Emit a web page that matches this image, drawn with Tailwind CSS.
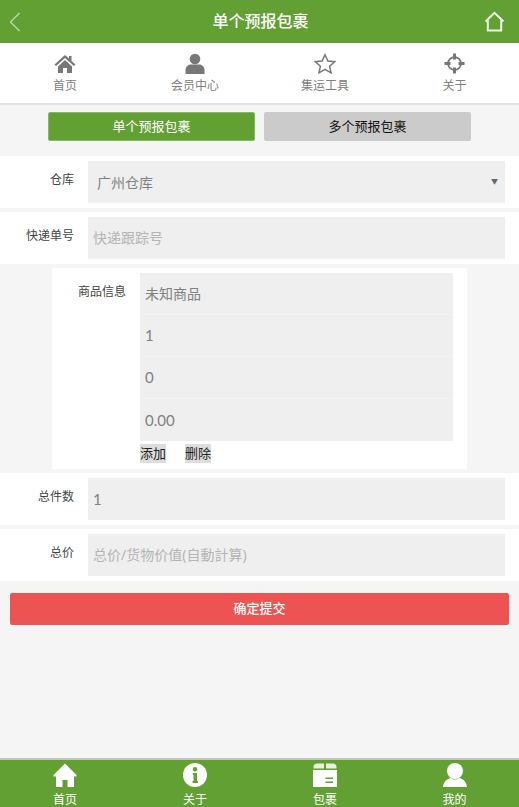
<!DOCTYPE html>
<html lang="zh">
<head>
<meta charset="utf-8">
<title>单个预报包裹</title>
<script src="https://cdn.jsdelivr.net/npm/@tailwindcss/browser@4"></script>
</head>
<body class="bg-[#f5f5f5] font-['Noto_Sans','Noto_Sans_CJK_SC',sans-serif]">
<div class="w-[519px] h-[807px] flex flex-col overflow-hidden">
  <header class="h-[43px] shrink-0 bg-[#62a033] grid grid-cols-[1fr_auto_1fr] items-center pl-[9px] pr-[14px]">
    <svg width="12" height="20" viewBox="0 0 12 20" fill="none" stroke="#b9d6a4" stroke-width="1.5"><path d="M10.5 1 L1.5 10 L10.5 19"/></svg>
    <h1 class="text-white text-[16px] leading-[43px] font-medium pl-[7px]">单个预报包裹</h1>
    <svg class="justify-self-end" width="21" height="21" viewBox="0 0 21 21" fill="none" stroke="#eef5e8" stroke-width="2"><path d="M1.5 10.5 L10.5 1.8 L19.5 10.5 M3.8 9 V19.5 H17.2 V9"/></svg>
  </header>
  <nav class="h-[62px] shrink-0 bg-white border-b-2 border-[#e2e2e2] grid grid-cols-[130px_130px_130px_129px] text-[12px] text-[#808080] text-center">
    <div class="flex flex-col items-center pt-[11px]">
      <svg width="22" height="20" viewBox="0 0 22 20" fill="#777"><path d="M11 1 L0.5 10.5 L2 12 L11 4 L20 12 L21.5 10.5 L17.5 7 V2 H15 V4.6 Z"/><path d="M4 12.5 L11 6 L18 12.5 V19 H13 V14 H9 V19 H4 Z"/></svg>
      <span class="leading-[16px] mt-[4px]">首页</span>
    </div>
    <div class="flex flex-col items-center pt-[10px]">
      <svg width="20" height="21" viewBox="0 0 20 21" fill="#777"><circle cx="10" cy="6" r="5.3"/><path d="M0.5 21 V17 C0.5 13.5 3.5 11.5 6 11.5 H14 C16.5 11.5 19.5 13.5 19.5 17 V21 Z"/></svg>
      <span class="leading-[16px] mt-[4px]">会员中心</span>
    </div>
    <div class="flex flex-col items-center pt-[10px]">
      <svg width="22" height="21" viewBox="0 0 22 21" fill="none" stroke="#777" stroke-width="1.5"><path d="M11 1.8 L13.9 8 L20.6 8.7 L15.6 13.2 L17 19.8 L11 16.4 L5 19.8 L6.4 13.2 L1.4 8.7 L8.1 8 Z"/></svg>
      <span class="leading-[16px] mt-[4px]">集运工具</span>
    </div>
    <div class="flex flex-col items-center pt-[10px]">
      <svg width="21" height="21" viewBox="0 0 21 21" fill="none" stroke="#777"><circle cx="10.5" cy="10.5" r="6.4" stroke-width="1.8"/><path d="M10.5 0.5 V6.5 M10.5 14.5 V20.5 M0.5 10.5 H6.5 M14.5 10.5 H20.5" stroke-width="3"/></svg>
      <span class="leading-[16px] mt-[4px]">关于</span>
    </div>
  </nav>
  <div class="flex-1 min-h-0 flex flex-col">
    <div class="flex gap-[9px] pl-[48px] pt-[7px] h-[51px] shrink-0 text-[13px]">
      <button class="w-[207px] h-[29px] rounded-[2px] bg-[#62a033] border border-[#85ba63] text-white">单个预报包裹</button>
      <button class="w-[207px] h-[29px] rounded-[2px] bg-[#cbcbcb] text-[#111]">多个预报包裹</button>
    </div>
    <div class="flex flex-col gap-[4px]">
      <div class="h-[52px] bg-white flex pt-[5px] pr-[14px]">
        <label class="w-[74px] text-right text-[12px] text-[#444] leading-[38px] h-[30px]">仓库</label>
        <div class="ml-[14px] flex-1 h-[42px] bg-[#efefef] flex items-center justify-between pl-[9px] pr-[7px] text-[14px] text-[#808080] pt-[1px]"><span>广州仓库</span><span class="text-[7px] text-[#666]">▼</span></div>
      </div>
      <div class="h-[52px] bg-white flex pt-[5px] pr-[14px]">
        <label class="w-[74px] text-right text-[12px] text-[#444] leading-[38px] h-[30px]">快递单号</label>
        <div class="ml-[14px] flex-1 h-[42px] bg-[#efefef] flex items-center px-[5px] pb-[1px] text-[14px] text-[#b4b4b4]">快递跟踪号</div>
      </div>
      <div class="h-[201px] ml-[52px] mr-[52px] bg-white flex pt-[5px]">
        <label class="w-[74px] text-right text-[12px] text-[#444] leading-[38px] h-[30px]">商品信息</label>
        <div class="ml-[14px] w-[313px]">
          <div class="bg-[#efefef] divide-y divide-[#f3f3f3] text-[14px] text-[#808080]">
            <div class="h-[42px] flex items-center px-[5px]">未知商品</div>
            <div class="h-[42px] flex items-center px-[5px] font-['Lato'] text-[15px]">1</div>
            <div class="h-[42px] flex items-center px-[5px] font-['Lato'] text-[15px]">0</div>
            <div class="h-[42px] flex items-center px-[5px] font-['Lato'] text-[15px]">0.00</div>
          </div>
          <div class="flex gap-[19px] mt-[3px] text-[13px] text-[#222]">
            <span class="bg-[#ddd] w-[26px] h-[19px] leading-[19px] text-center">添加</span>
            <span class="bg-[#ddd] w-[26px] h-[19px] leading-[19px] text-center">删除</span>
          </div>
        </div>
      </div>
      <div class="h-[52px] bg-white flex pt-[5px] pr-[14px]">
        <label class="w-[74px] text-right text-[12px] text-[#444] leading-[38px] h-[30px]">总件数</label>
        <div class="ml-[14px] flex-1 h-[42px] bg-[#efefef] flex items-center px-[5px] font-['Lato'] text-[15px] text-[#808080]">1</div>
      </div>
      <div class="h-[52px] bg-white flex pt-[5px] pr-[14px]">
        <label class="w-[74px] text-right text-[12px] text-[#444] leading-[38px] h-[30px]">总价</label>
        <div class="ml-[14px] flex-1 h-[42px] bg-[#efefef] flex items-center px-[5px] pb-[1px] text-[14px] text-[#b4b4b4]">总价/货物价值(自動計算)</div>
      </div>
    </div>
    <button class="mx-[10px] mt-[12px] h-[32px] shrink-0 rounded-[2px] bg-[#ee5353] text-white text-[13px] font-medium">确定提交</button>
  </div>
  <footer class="h-[49px] shrink-0 bg-[#62a033] border-t-2 border-[#c2c8bd] grid grid-cols-[130px_130px_130px_129px] text-[12px] text-white text-center overflow-hidden">
    <div class="flex flex-col items-center pt-[3px]">
      <svg width="24" height="24" viewBox="0 0 24 24" fill="#fff"><path d="M12 0.5 L0.5 12 V13.5 H3 V24 H9.5 V17 H14.5 V24 H21 V13.5 H23.5 V12 Z"/></svg>
      <span class="leading-[14px] mt-[6px]">首页</span>
    </div>
    <div class="flex flex-col items-center pt-[3px]">
      <svg width="24" height="24" viewBox="0 0 24 24"><circle cx="12" cy="12" r="12" fill="#fff"/><circle cx="12" cy="6.2" r="2.2" fill="#62a033"/><path d="M9.8 10 H14 V18 H15 V20 H9.5 V18 H10.5 V12 H9.8 Z" fill="#62a033"/></svg>
      <span class="leading-[14px] mt-[6px]">关于</span>
    </div>
    <div class="flex flex-col items-center pt-[3px]">
      <svg width="24" height="24" viewBox="0 0 24 24" fill="#fff"><path d="M3.5 0.5 H11 V5.5 H0.5 V4 Q0.5 1 3.5 0.5 Z M13 0.5 H20.5 Q23.5 1 23.5 4 V5.5 H13 Z" opacity="0.85"/><path d="M0 7 H24 V24 H0 Z M12.5 14.5 V16 H20 V14.5 Z M12.5 18.5 V20 H20 V18.5 Z" fill-rule="evenodd"/></svg>
      <span class="leading-[14px] mt-[6px]">包裹</span>
    </div>
    <div class="flex flex-col items-center pt-[3px]">
      <svg width="24" height="24" viewBox="0 0 24 24" fill="#fff"><circle cx="12" cy="8" r="8"/><path d="M0 24 C0.5 19 4 15.5 8 15 Q12 18 16 15 C20 15.5 23.5 19 24 24 Z"/></svg>
      <span class="leading-[14px] mt-[6px]">我的</span>
    </div>
  </footer>
</div>
</body>
</html>
